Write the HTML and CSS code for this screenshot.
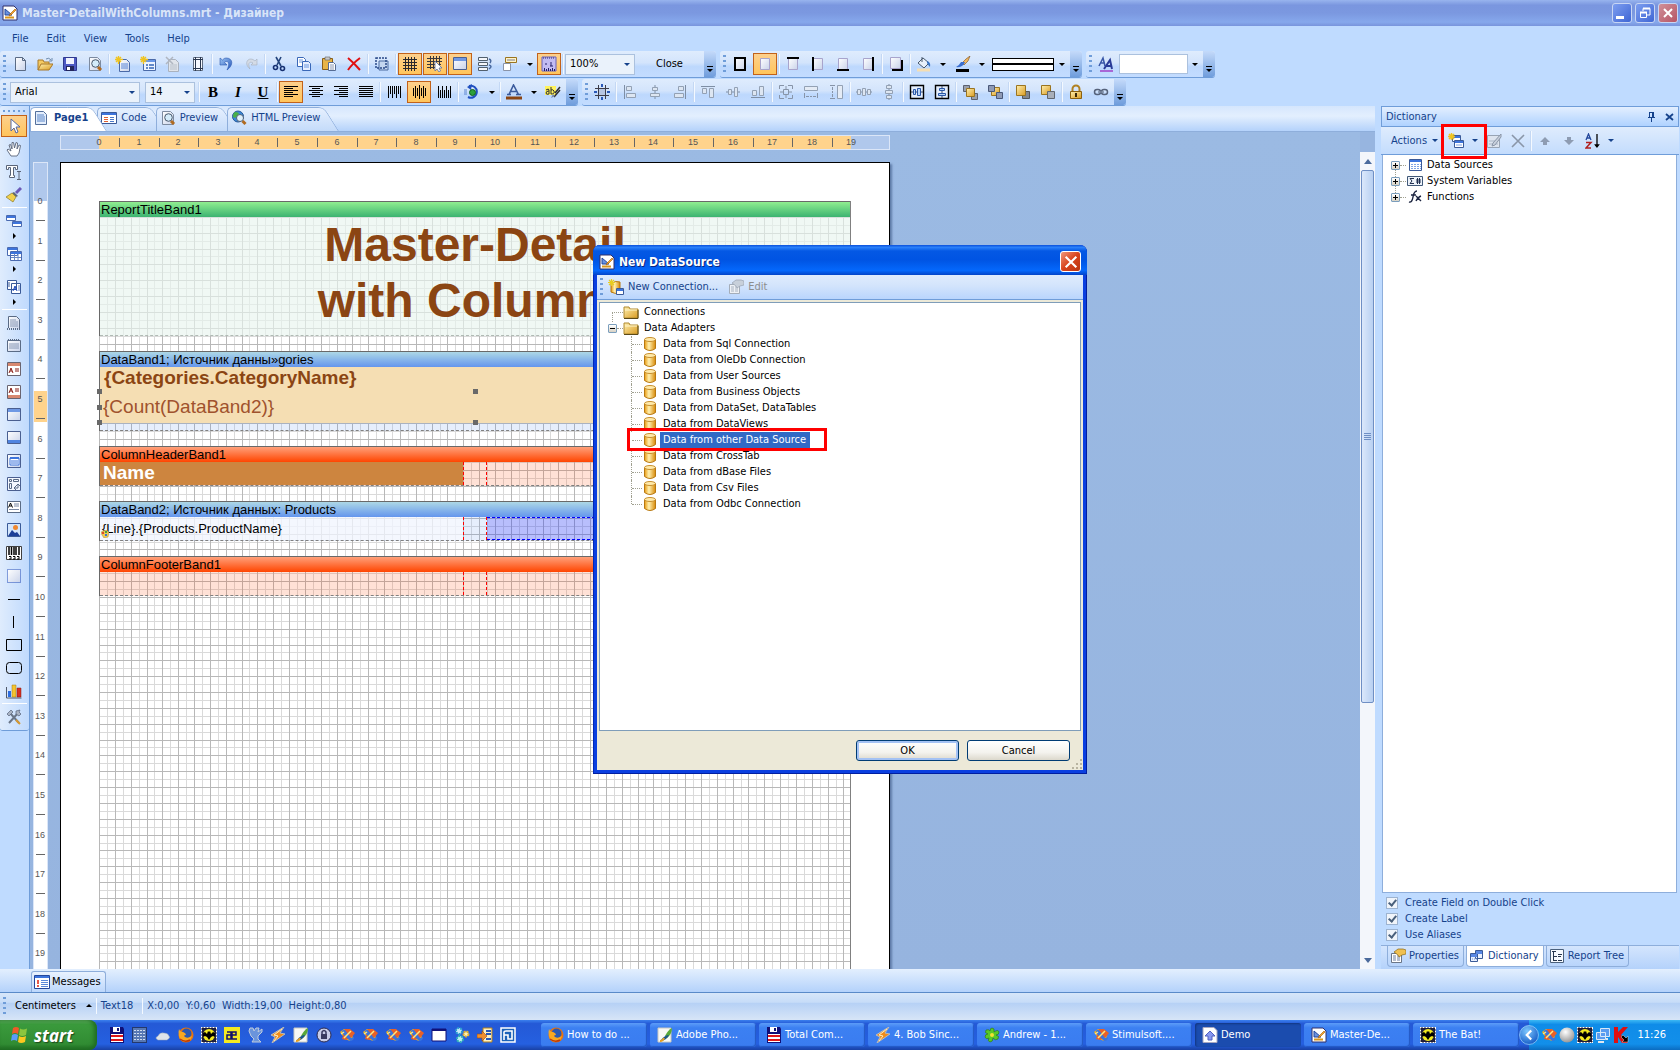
FILE: index.html
```html
<!DOCTYPE html>
<html lang="en">
<head>
    <meta charset="UTF-8">
    <title>Master-DetailWithColumns.mrt - Дизайнер</title>
    <link rel="stylesheet" href="styles.css">
</head>
<body>
<!-- icons -->
<svg class="sprite" aria-hidden="true">
    <defs>
        <linearGradient id="gPaper" x1="0" y1="0" x2="1" y2="1"><stop offset="0" stop-color="#fff"/><stop offset="1" stop-color="#c9d3ea"/></linearGradient>
        <linearGradient id="gGold" x1="0" y1="0" x2="1" y2="1"><stop offset="0" stop-color="#fff0b0"/><stop offset="1" stop-color="#d99a20"/></linearGradient>
        <linearGradient id="gDb" x1="0" y1="0" x2="1" y2="0"><stop offset="0" stop-color="#e89a10"/><stop offset=".4" stop-color="#fff0b0"/><stop offset="1" stop-color="#d88a08"/></linearGradient>
        <linearGradient id="gBlue" x1="0" y1="0" x2="1" y2="1"><stop offset="0" stop-color="#9cc4f4"/><stop offset="1" stop-color="#2455b8"/></linearGradient>
        <radialGradient id="gBall" cx=".4" cy=".3" r=".8"><stop offset="0" stop-color="#fff"/><stop offset="1" stop-color="#8a8a8a"/></radialGradient>
        <radialGradient id="gTray" cx=".4" cy=".3" r=".8"><stop offset="0" stop-color="#7cc8ff"/><stop offset="1" stop-color="#0a50c0"/></radialGradient>
    </defs>
    <symbol id="app" viewBox="0 0 16 16"><path d="M1 1h11l3 3v11H1z" fill="#fff" stroke="#30306a"/><path d="M3 4v6h7z" fill="#6a92e0" stroke="#23479c"/><path d="M13 4L8 9l-1 2 2-1 5-5z" fill="#f6a82c" stroke="#a05808" stroke-width=".6"/><path d="M3 12.500h9" stroke="#d8951c" stroke-width="2"/></symbol>
    <symbol id="new" viewBox="0 0 16 16"><path d="M3.500 1.500h7l3 3v10h-10z" fill="url(#gPaper)" stroke="#5a6b85"/><path d="M10.500 1.500v3h3" fill="none" stroke="#5a6b85"/></symbol>
    <symbol id="open" viewBox="0 0 16 16"><path d="M1 14V4h5l1 2h5v2" fill="#f4ca62" stroke="#a8782a"/><path d="M1 14l3-6h12l-4 6z" fill="url(#gGold)" stroke="#a8782a"/><path d="M9 3q3-2 5 1m1-2v3h-3" fill="none" stroke="#6f8bab"/></symbol>
    <symbol id="save" viewBox="0 0 16 16"><path d="M1.500 1.500h13v13h-12l-1-1z" fill="#4d59c4" stroke="#303a90"/><path d="M4 2h8v6H4z" fill="#f0f2ff"/><path d="M4 10h8v5H4z" fill="#23265c"/><path d="M5 11h3v3H5z" fill="#fff"/></symbol>
    <symbol id="preview" viewBox="0 0 16 16"><path d="M2.500 1.500h8l3 3v10h-11z" fill="url(#gPaper)" stroke="#7d8ba0"/><circle cx="8.500" cy="7.500" r="3.800" fill="#d4ecfa" stroke="#48586c"/><path d="M11 11l3 3" stroke="#b06a20" stroke-width="3"/></symbol>
    <symbol id="newpage" viewBox="0 0 16 16"><path d="M4.500 3.500h7l3 3v9h-10z" fill="url(#gPaper)" stroke="#4a6aa8"/><path d="M6 8h7M6 10h7M6 12h7" stroke="#5a86d8"/><path d="M3.500 0v8M0 3.500h8M1 1l5 5M6 1L1 6" stroke="#f0c420" stroke-width="1.400"/></symbol>
    <symbol id="newform" viewBox="0 0 16 16"><path d="M3.500 3.500h12v11h-12z" fill="#eef4ff" stroke="#4a6aa8"/><path d="M4 4h11v2H4z" fill="#6a98e8"/><path d="M6 9h2M9 9h5M6 12h2M9 12h5" stroke="#3465b8" stroke-width="1.500"/><path d="M3.500 0v8M0 3.500h8M1 1l5 5M6 1L1 6" stroke="#f0c420" stroke-width="1.400"/></symbol>
    <symbol id="delpage" viewBox="0 0 16 16"><path d="M3.500 3.500h7l3 3v9h-10z" fill="#e0e4ea" stroke="#aab2be"/><path d="M5 9h7M5 11h7M5 13h7" stroke="#b8c0ca"/><path d="M1 1l7 7M8 1L1 8" stroke="#b0b6c0" stroke-width="1.500"/></symbol>
    <symbol id="pagesetup" viewBox="0 0 16 16"><path d="M3.500 1.500h9v13h-9z" fill="#f5f8ff" stroke="#5f6c80"/><path d="M5.500 1v14M10.500 1v14M3 3.500h10M3 12.500h10" stroke="#2a3850"/></symbol>
    <symbol id="undo" viewBox="0 0 16 16"><path d="M2 2v7h7L6.500 6.500C9 4 13 6 9 14c7-5 6-12-1-12Q6 2 4.500 4z" fill="url(#gBlue)" stroke="#2a58b0" stroke-width=".6"/></symbol>
    <symbol id="redo" viewBox="0 0 16 16"><path d="M14 3v6H8l2-2C7 5 4 7 7 13 2 9 3 3 8 3q2 0 4 2z" fill="#d4dbe6" stroke="#a4aebc" stroke-width=".6"/></symbol>
    <symbol id="cut" viewBox="0 0 16 16"><path d="M5 1l5 9M10 1L6 9" stroke="#24447c" stroke-width="1.600"/><circle cx="4.500" cy="11.500" r="2" fill="none" stroke="#162f70" stroke-width="1.600"/><circle cx="11.500" cy="12.500" r="2" fill="none" stroke="#162f70" stroke-width="1.600"/></symbol>
    <symbol id="copy" viewBox="0 0 16 16"><path d="M1.500 1.500h6l2 2v7h-8z" fill="#fff" stroke="#3a68b8"/><path d="M6.500 5.500h6l2 2v7h-8z" fill="#e6eeff" stroke="#3a68b8"/><path d="M3 4h4M3 6h3M8 9h5M8 11h5" stroke="#6a98e0"/></symbol>
    <symbol id="paste" viewBox="0 0 16 16"><path d="M1.500 2.500h10v11h-10z" fill="#e8b446" stroke="#8a6018"/><path d="M4 1h5v3H4z" fill="#c9c9c9" stroke="#606060" stroke-width=".6"/><path d="M7.500 6.500h5l2 2v6h-7z" fill="#fff" stroke="#566c94"/><path d="M9 9h4M9 11h4M9 13h4" stroke="#8a98b4"/></symbol>
    <symbol id="delete" viewBox="0 0 16 16"><path d="M2 2q6 5 12 12M14 2Q6 8 2 14" fill="none" stroke="#e01010" stroke-width="2"/></symbol>
    <symbol id="selectall" viewBox="0 0 16 16"><path d="M5 5h9v9H5z" fill="#c4d6f0" stroke="#4a6aa0"/><path d="M2 2h10v10H2z" fill="none" stroke="#2a4a88" stroke-width="1.500" stroke-dasharray="2 1"/></symbol>
    <symbol id="grid" viewBox="0 0 16 16"><path d="M3.500 1v14M6.500 1v14M9.500 1v14M12.500 1v14M1 3.500h14M1 6.500h14M1 9.500h14M1 12.500h14" stroke="#28282c"/></symbol>
    <symbol id="gridsnap" viewBox="0 0 16 16"><path d="M3.500 0v13M6.500 0v13M9.500 0v13M12.500 0v9M0 2.500h15M0 5.500h15M0 8.500h14M0 11.500h8" stroke="#38383c"/><path d="M8 5v10l2-2 2 3 1.500-1-1.500-3h3z" fill="#fff" stroke="#5a6ea0" stroke-width=".8"/></symbol>
    <symbol id="headers" viewBox="0 0 16 16"><path d="M1.500 1.500h13v12h-13z" fill="url(#gPaper)" stroke="#4a5f90"/><path d="M2 2h12v3H2z" fill="#6f98e4"/></symbol>
    <symbol id="order" viewBox="0 0 16 16"><path d="M1.500 1.500h9v3h-9zM1.500 6.500h9v3h-9zM1.500 11.500h9v3h-9z" fill="#f4f6fa" stroke="#52606e"/><path d="M12 3q3 1 1 4m-1 2q4 1 0 4" fill="none" stroke="#4a6aa0" stroke-width="1.500"/></symbol>
    <symbol id="quick" viewBox="0 0 16 16"><path d="M3.500 1.500h11v5h-11z" fill="#fff4c8" stroke="#9a7420"/><path d="M5 4h8" stroke="#7a7a90"/><path d="M1.500 7.500h7v7h-7z" fill="#fff" stroke="#8a94a8"/></symbol>
    <symbol id="rulers" viewBox="0 0 16 16"><path d="M1 1h14v14H1z" fill="#c2bcf2" stroke="#6a62b8"/><path d="M2 2h12" stroke="#2c2870" stroke-dasharray="1 1"/><path d="M3.500 12v3M5.500 13v2M7.500 12v3M9.500 13v2M11.500 12v3M13.500 13v2M4 8h2M10 6v4M9 10h3" stroke="#24206a"/></symbol>
    <symbol id="ball" viewBox="0 0 16 16"><path d="M3 2h10v12H3z" fill="url(#gPaper)" stroke="#000" stroke-width="2"/></symbol>
    <symbol id="bnone" viewBox="0 0 16 16"><path d="M3.500 2.500h9v11h-9z" fill="url(#gPaper)" stroke="#a8a4cc"/></symbol>
    <symbol id="btop" viewBox="0 0 16 16"><path d="M3.500 2.500h9v11h-9z" fill="url(#gPaper)" stroke="#a8a4cc"/><path d="M2 2h12" stroke="#000" stroke-width="2"/></symbol>
    <symbol id="bleft" viewBox="0 0 16 16"><path d="M3.500 2.500h9v11h-9z" fill="url(#gPaper)" stroke="#a8a4cc"/><path d="M3 1v14" stroke="#000" stroke-width="2"/></symbol>
    <symbol id="bbottom" viewBox="0 0 16 16"><path d="M3.500 2.500h9v11h-9z" fill="url(#gPaper)" stroke="#a8a4cc"/><path d="M2 14h12" stroke="#000" stroke-width="2"/></symbol>
    <symbol id="bright" viewBox="0 0 16 16"><path d="M3.500 2.500h9v11h-9z" fill="url(#gPaper)" stroke="#a8a4cc"/><path d="M13 1v14" stroke="#000" stroke-width="2"/></symbol>
    <symbol id="shadow" viewBox="0 0 16 16"><path d="M4 4h11v11H4z" fill="#000"/><path d="M2.500 1.500h10v11h-10z" fill="url(#gPaper)" stroke="#a8a4cc"/></symbol>
    <symbol id="bucket" viewBox="0 0 16 16"><path d="M2 7l5-5 6 5-5 5z" fill="#e8f0fa" stroke="#48586c"/><path d="M6 6V1" stroke="#48586c"/><path d="M11 5q4 1 3 6-2-2-3-4" fill="#3a74c4"/><path d="M1 14h13" stroke="#f5deb3" stroke-width="3"/></symbol>
    <symbol id="pen" viewBox="0 0 16 16"><path d="M15 0l-2 5-4 4-2-2 4-4z" fill="#f0b860" stroke="#7a4a18" stroke-width=".6"/><path d="M10 6q-2 6-9 5 3-1 5-5z" fill="#3a6ed0"/><path d="M1 14.500h13" stroke="#000" stroke-width="3"/></symbol>
    <symbol id="style" viewBox="0 0 16 16"><path d="M1 10L5 2l2 8M2 7h5" fill="none" stroke="#3a58a8" stroke-width="1.500"/><path d="M6 13l6-9 2 9M8 10h5" fill="none" stroke="#2a3c98" stroke-width="2"/><path d="M2 15h13" stroke="#a040c8" stroke-width="1.500"/></symbol>
    <symbol id="aleft" viewBox="0 0 16 16"><path d="M1 2.500h14M1 4.500h9M1 6.500h14M1 8.500h9M1 10.500h14M1 12.500h9" stroke="#000"/></symbol>
    <symbol id="acenter" viewBox="0 0 16 16"><path d="M1 2.500h14M4 4.500h8M1 6.500h14M4 8.500h8M1 10.500h14M4 12.500h8" stroke="#000"/></symbol>
    <symbol id="aright" viewBox="0 0 16 16"><path d="M1 2.500h14M6 4.500h9M1 6.500h14M6 8.500h9M1 10.500h14M6 12.500h9" stroke="#000"/></symbol>
    <symbol id="ajust" viewBox="0 0 16 16"><path d="M1 2.500h14M1 4.500h14M1 6.500h14M1 8.500h14M1 10.500h14M1 12.500h14" stroke="#000"/></symbol>
    <symbol id="vtop" viewBox="0 0 16 16"><path d="M2.500 2v12M4.500 2v8M6.500 2v12M8.500 2v8M10.500 2v12M12.500 2v8M14.500 2v12" stroke="#000"/></symbol>
    <symbol id="vmid" viewBox="0 0 16 16"><path d="M2.500 4v8M4.500 2v12M6.500 4v8M8.500 1v14M10.500 4v8M12.500 2v12M14.500 4v8" stroke="#000"/></symbol>
    <symbol id="vbot" viewBox="0 0 16 16"><path d="M2.500 2v12M4.500 6v8M6.500 2v12M8.500 6v8M10.500 2v12M12.500 6v8M14.500 2v12" stroke="#000"/></symbol>
    <symbol id="rotate" viewBox="0 0 16 16"><path d="M5 2a6 6 0 1 1-1 11" fill="none" stroke="#2050c0" stroke-width="2"/><path d="M8 0L3 3l4 3z" fill="#2050c0"/><circle cx="8.500" cy="8.500" r="3" fill="#2da03a" stroke="#11601c"/><path d="M0 6h3M0 8h3M0 10h3" stroke="#5a84d0"/></symbol>
    <symbol id="fontcolor" viewBox="0 0 16 16"><path d="M3 10.500L7.500 1l5 9.500M5 7.500h6M1 10.500h4M10 10.500h5" fill="none" stroke="#3a5a9c" stroke-width="1.600"/><path d="M0 14h16" stroke="#8b4513" stroke-width="3"/></symbol>
    <symbol id="cond" viewBox="0 0 16 16"><path d="M0 2h11v9H0z" fill="#fff35c"/><path d="M10 9l5-6M9 13l6-7" stroke="#303030" stroke-width="1.500"/><path d="M1 6q3-2 3 0v4q-3 1-3-1 0-2 3-2M6 3v7q4 0 3-3-1-2-3-1" fill="none" stroke="#303030"/><path d="M6 14l4-2-2-2z" fill="#7888a8"/></symbol>
    <symbol id="togrid" viewBox="0 0 16 16"><path d="M5 5h6v6H5z" fill="#b6c6e4"/><path d="M4.500 1v14M11.500 1v14M1 4.500h14M1 11.500h14" stroke="#3c3c48"/><path d="M8 0v3M8 13v3M0 8h3M13 8h3" stroke="#2a58b8" stroke-width="2"/></symbol>
    <symbol id="gleft" viewBox="0 0 16 16"><path d="M2.500 1v14" stroke="#7e8ea4"/><path d="M4.500 2.500h5v4h-5zM4.500 9.500h9v4h-9z" fill="#dde6f2" stroke="#93a1b4"/></symbol>
    <symbol id="gcenter" viewBox="0 0 16 16"><path d="M8 1v14" stroke="#7e8ea4"/><path d="M5.500 3.500h5v3h-5zM3.500 9.500h9v3h-9z" fill="#dde6f2" stroke="#93a1b4"/></symbol>
    <symbol id="gright" viewBox="0 0 16 16"><path d="M13.500 1v14" stroke="#7e8ea4"/><path d="M6.500 2.500h5v4h-5zM2.500 9.500h9v4h-9z" fill="#dde6f2" stroke="#93a1b4"/></symbol>
    <symbol id="gtop" viewBox="0 0 16 16"><path d="M1 2.500h14" stroke="#7e8ea4"/><path d="M2.500 4.500h4v5h-4zM9.500 4.500h4v9h-4z" fill="#dde6f2" stroke="#93a1b4"/></symbol>
    <symbol id="gmid" viewBox="0 0 16 16"><path d="M1 8h14" stroke="#7e8ea4"/><path d="M3.500 5.500h3v5h-3zM9.500 3.500h3v9h-3z" fill="#dde6f2" stroke="#93a1b4"/></symbol>
    <symbol id="gbot" viewBox="0 0 16 16"><path d="M1 13.500h14" stroke="#7e8ea4"/><path d="M2.500 6.500h4v5h-4zM9.500 2.500h4v9h-4z" fill="#dde6f2" stroke="#93a1b4"/></symbol>
    <symbol id="gsize" viewBox="0 0 16 16"><path d="M1.500 5V1.500H6M10 1.500h4.500V5M1.500 11v3.500H6M10 14.500h4.500V11M8 2v3M8 11v3M2 8h3M11 8h3M5.500 5.500h5v5h-5z" fill="none" stroke="#8794a8"/></symbol>
    <symbol id="gwidth" viewBox="0 0 16 16"><path d="M1.500 2.500h13v4h-13z" fill="#e4ebf5" stroke="#93a1b4"/><path d="M1.500 9v5M14.500 9v5M3 12.500h3M10 12.500h3M7 12.500h2" stroke="#8794a8"/></symbol>
    <symbol id="gheight" viewBox="0 0 16 16"><path d="M9.500 1.500h5v13h-5z" fill="#e4ebf5" stroke="#93a1b4"/><path d="M2 1.500h5M2 14.500h5M4.500 3v3M4.500 10v3M4.500 7v2" stroke="#8794a8"/></symbol>
    <symbol id="ghor" viewBox="0 0 16 16"><path d="M0 8h16" stroke="#7e8ea4"/><path d="M1.500 5.500h3v5h-3zM6.500 4.500h3v7h-3zM11.500 5.500h3v5h-3z" fill="#dde6f2" stroke="#93a1b4"/></symbol>
    <symbol id="gver" viewBox="0 0 16 16"><path d="M8 0v16" stroke="#7e8ea4"/><path d="M5.500 1.500h5v3h-5zM4.500 6.500h7v3h-7zM5.500 11.500h5v3h-5z" fill="#dde6f2" stroke="#93a1b4"/></symbol>
    <symbol id="chor" viewBox="0 0 16 16"><path d="M1.500 1.500h13v13h-13z" fill="#e4eefc" stroke="#000" stroke-width="1.400"/><path d="M2 8h12" stroke="#3a4a66"/><path d="M4.500 5.500h2v5h-2zM8.500 4.500h3v7h-3z" fill="#b8d4f8" stroke="#2a57a8"/></symbol>
    <symbol id="cver" viewBox="0 0 16 16"><path d="M1.500 1.500h13v13h-13z" fill="#e4eefc" stroke="#000" stroke-width="1.400"/><path d="M8 2v12" stroke="#3a4a66"/><path d="M5.500 4.500h5v2h-5zM4.500 9.500h7v2h-7z" fill="#b8d4f8" stroke="#2a57a8"/></symbol>
    <symbol id="front" viewBox="0 0 16 16"><path d="M1.500 1.500h6v6h-6zM9.500 9.500h6v6h-6z" fill="#9aa0ac" stroke="#5a6070"/><path d="M4.500 4.500h8v8h-8z" fill="url(#gGold)" stroke="#9a7420"/></symbol>
    <symbol id="back" viewBox="0 0 16 16"><path d="M4.500 3.500h8v8h-8z" fill="url(#gGold)" stroke="#9a7420"/><path d="M1.500 1.500h6v6h-6zM9.500 8.500h6v6h-6z" fill="#8f9ab4" stroke="#4a5878"/></symbol>
    <symbol id="fwd" viewBox="0 0 16 16"><path d="M7.500 7.500h7v7h-7z" fill="#808690" stroke="#505660"/><path d="M1.500 1.500h9v10h-9z" fill="url(#gGold)" stroke="#9a7420"/></symbol>
    <symbol id="bwd" viewBox="0 0 16 16"><path d="M1.500 1.500h9v9h-9z" fill="url(#gGold)" stroke="#9a7420"/><path d="M7.500 7.500h7v7h-7z" fill="#a8aeb8" stroke="#606670"/></symbol>
    <symbol id="lock" viewBox="0 0 16 16"><path d="M4.500 8V5a3.500 3.500 0 0 1 7 0v3" fill="none" stroke="#b08020" stroke-width="2"/><path d="M2.500 7.500h11v7h-11z" fill="url(#gGold)" stroke="#8a6010"/><path d="M8 9v4" stroke="#3a2808" stroke-width="2"/></symbol>
    <symbol id="link" viewBox="0 0 16 16"><rect x="1.500" y="5.500" width="6" height="5" rx="2.500" fill="none" stroke="#56627a" stroke-width="1.500"/><rect x="8.500" y="5.500" width="6" height="5" rx="2.500" fill="none" stroke="#56627a" stroke-width="1.500"/><path d="M5 8h6" stroke="#7a88a0" stroke-width="1.500"/></symbol>
    <symbol id="arrow" viewBox="0 0 16 16"><path d="M5 1v12l3-3 2 5 2-1-2-5h4z" fill="#fff" stroke="#5566a0"/></symbol>
    <symbol id="hand" viewBox="0 0 16 16"><path d="M5 15L1 9l1-1 3 2-2-6 1.500-.5L6 8 6 1.500h1.500L8.500 7 10 1.500l1.500.5L11 8l2-4 1.500.5L13 12l-2 3z" fill="#fff" stroke="#5a6478" stroke-width=".9"/></symbol>
    <symbol id="text" viewBox="0 0 16 16"><path d="M.5 1.500h11v4h-2v-2h-2v8h1v2h-5v-2h1v-8h-2v2h-2z" fill="#fff" stroke="#5a6478"/><path d="M11 7.500h4M13 8v7M11 15.500h4" stroke="#5a6478"/></symbol>
    <symbol id="brush" viewBox="0 0 16 16"><path d="M15 1l-5 5" stroke="#6a5ab8" stroke-width="3"/><path d="M8 5l4 4-2 1-4-4z" fill="#606878"/><path d="M6 6l4 4-3 5-7-5z" fill="#f2d04c" stroke="#8a7a28" stroke-width=".7"/></symbol>
    <symbol id="bands" viewBox="0 0 16 16"><path d="M.5 2.500h9v5h-9zM6.500 8.500h9v5h-9z" fill="#fff" stroke="#4a6ab0"/><path d="M1 3h8v2H1zM7 9h8v2H7z" fill="#3d74dc"/></symbol>
    <symbol id="cross" viewBox="0 0 16 16"><path d="M1.500 1.500h10v8h-10zM4.500 5.500h11v9h-11z" fill="#fff" stroke="#4a6ab0"/><path d="M2 2h9v2H2zM5 6h10v2H5z" fill="#3d74dc"/><path d="M5 11.500h10M8.500 8v6M12 8v6" stroke="#6a88c4"/></symbol>
    <symbol id="comps" viewBox="0 0 16 16"><path d="M1.500 1.500h9v9h-9zM5.500 4.500h9v10h-9z" fill="#fff" stroke="#3a5a98"/><path d="M3 3v5" stroke="#3a5a98"/><path d="M7 12l2-5 2 5M8 10h2" fill="none" stroke="#1c48b8"/><path d="M12 7h2M12 9h2M12 11h2" stroke="#6a88c4"/></symbol>
    <symbol id="ptop" viewBox="0 0 16 16"><path d="M2.500 13V1.500h8l3 3V14" fill="url(#gPaper)" stroke="#5a6b85"/><path d="M4 5h6M4 7h8M4 9h8M4 11h8" stroke="#8898b4"/><path d="M1 14h14" stroke="#5a6b85" stroke-width="2" stroke-dasharray="1 1"/></symbol>
    <symbol id="pband" viewBox="0 0 16 16"><path d="M1.500 2.500h13v11h-13z" fill="url(#gPaper)" stroke="#5a6b85"/><path d="M2 2h12" stroke="#5a6b85" stroke-width="2" stroke-dasharray="1 1"/><path d="M3 6h10M3 8h10M3 10h10" stroke="#8898b4"/></symbol>
    <symbol id="hdr" viewBox="0 0 16 16"><path d="M1.500 1.500h13v13h-13z" fill="#fff" stroke="#6a6470"/><path d="M2 2h12v3H2z" fill="#d88870"/><path d="M3 12l2-5 2 5M4 10h2M9 8h4M9 10h4" fill="none" stroke="#8a1c14"/></symbol>
    <symbol id="ftr" viewBox="0 0 16 16"><path d="M1.500 1.500h13v13h-13z" fill="#fff" stroke="#6a6470"/><path d="M2 11h12v3H2z" fill="#d88870"/><path d="M3 9l2-5 2 5M4 7h2M9 5h4M9 7h4" fill="none" stroke="#8a1c14"/></symbol>
    <symbol id="ftrblue" viewBox="0 0 16 16"><path d="M1.500 1.500h13v12h-13z" fill="url(#gPaper)" stroke="#4a5f90"/><path d="M2 10h12v3H2z" fill="#4f84e0"/></symbol>
    <symbol id="dataBand" viewBox="0 0 16 16"><path d="M1.500 1.500h13v13h-13z" fill="url(#gPaper)" stroke="#4a5f90"/><path d="M4 5h9v7H4z" fill="#fff" stroke="#3d74dc"/><path d="M5 8h7M5 10h7" stroke="#3d74dc"/><path d="M4 5h9" stroke="#3d74dc" stroke-width="2"/></symbol>
    <symbol id="crosstab" viewBox="0 0 16 16"><path d="M1.500 1.500h13v13h-13z" fill="#f4f8ff" stroke="#4a5f90"/><path d="M3.500 3.500h2v2h-2zM3.500 7.500h2v5h-2zM7.500 3.500h5v2h-5zM8 12h4V8M10 10l2-2 2 2M10 10l-2 2 2 2" fill="none" stroke="#5a6b85"/></symbol>
    <symbol id="textbox" viewBox="0 0 16 16"><path d="M1.500 2.500h13v11h-13z" fill="#fff" stroke="#5a6b85"/><path d="M2.500 8.500l2-4.500 2 4.500M3.500 7h2" fill="none" stroke="#000"/><path d="M8 5h5M8 7h5M3 10.500h10" stroke="#7888a4"/></symbol>
    <symbol id="image" viewBox="0 0 16 16"><path d="M1.500 1.500h13v13h-13z" fill="#d4e6fc" stroke="#3a5a98"/><path d="M2 14l4-6 3 3 2-1 3 4z" fill="#1c3f98"/><circle cx="9.500" cy="5.500" r="2.500" fill="#f08830"/></symbol>
    <symbol id="barcode" viewBox="0 0 16 16"><path d="M.5 1.500h15v13H.5z" fill="#fff" stroke="#404040"/><path d="M3 2v8M5.500 2v8M8 2v8M10 2v8M13 2v8" stroke="#000" stroke-width="1.500"/><path d="M3 11.500h2v2.500H3M7 11.500h2v2.500H7M11 11.500h2v2.500h-2" fill="none" stroke="#000"/></symbol>
    <symbol id="panel" viewBox="0 0 16 16"><path d="M1.500 1.500h13v13h-13z" fill="url(#gPaper)" stroke="#1c48b8" stroke-dasharray="1 1"/></symbol>
    <symbol id="hline" viewBox="0 0 16 16"><path d="M2 8.500h12" stroke="#000"/></symbol>
    <symbol id="vline" viewBox="0 0 16 16"><path d="M7.500 2v12" stroke="#000"/></symbol>
    <symbol id="rect" viewBox="0 0 16 16"><path d="M.5 2.500h15v11H.5z" fill="none" stroke="#000"/></symbol>
    <symbol id="rrect" viewBox="0 0 16 16"><rect x=".5" y="2.500" width="15" height="11" rx="3" fill="none" stroke="#000"/></symbol>
    <symbol id="chart" viewBox="0 0 16 16"><path d="M.5 4v11h15" fill="none" stroke="#505868"/><path d="M2 8h3v6H2z" fill="#2c6ce0"/><path d="M6 2h4v12H6z" fill="#f4c430" stroke="#a07a10" stroke-width=".5"/><path d="M11 5h4v9h-4z" fill="#d83020" stroke="#801810" stroke-width=".5"/></symbol>
    <symbol id="tools" viewBox="0 0 16 16"><path d="M3 14L12 4M4 4l9 10" stroke="#6a7688" stroke-width="2"/><path d="M1 5l4-4 2 2-4 4zM10 2l4-1-1 2 2 2-2 2-3-2z" fill="#aab4c4" stroke="#56627a" stroke-width=".7"/><path d="M10 11l4 4" stroke="#d89a30" stroke-width="2"/></symbol>
    <symbol id="page" viewBox="0 0 16 16"><path d="M2.500 1.500h8l3 3v10h-11z" fill="#e4eefc" stroke="#54709c"/><path d="M4 5h7M4 7h8M4 9h8M4 11h8" stroke="#5a86c8"/></symbol>
    <symbol id="code" viewBox="0 0 16 16"><path d="M.5 2.500h15v11H.5z" fill="#fff" stroke="#3a5a98"/><path d="M1 3h14v2H1z" fill="#3d74dc"/><path d="M3 7.500h4M3 9.500h4M3 11.500h4" stroke="#e06030"/><path d="M9 7.500h4M9 9.500h4M9 11.500h4" stroke="#4a78c8"/></symbol>
    <symbol id="globe" viewBox="0 0 16 16"><circle cx="7" cy="6.500" r="5.500" fill="#3a88d8" stroke="#2a5a98"/><path d="M4 2q5 0 4 4-4 3-6 1 0-4 2-5" fill="#48b048"/><circle cx="9" cy="8" r="3.500" fill="#e0f0fa" stroke="#506078"/><path d="M11.500 11l3 3" stroke="#b06a20" stroke-width="3"/></symbol>
    <symbol id="table" viewBox="0 0 16 16"><path d="M2.500 2.500h12v11h-12z" fill="#fff" stroke="#3a5a98"/><path d="M3 3h11v2H3z" fill="#3d74dc"/><path d="M4 7.500h10M4 9.500h10M4 11.500h10" stroke="#80a4e4" stroke-dasharray="2 1"/></symbol>
    <symbol id="sigma" viewBox="0 0 16 16"><path d="M.5 3.500h15v9H.5z" fill="#eef3fa" stroke="#405878"/><path d="M7 5.500H3l2 2.500-2 2.500h4M10.500 5v6M12.500 5v6M9 7h5M9 9h5" fill="none" stroke="#203050"/></symbol>
    <symbol id="fx" viewBox="0 0 16 16"><path d="M2 13q3 1 4-5t4-6M4 6h5M9 7l5 5M14 7q-3 1-5 5" fill="none" stroke="#1c2440" stroke-width="1.400"/></symbol>
    <symbol id="newds" viewBox="0 0 16 16"><path d="M4.500 2.500h8v6h-8zM6.500 7.500h9v7h-9z" fill="#fff" stroke="#3a5a98"/><path d="M5 3h7v2H5zM7 8h8v2H7z" fill="#3d74dc"/><path d="M8 12h6" stroke="#80a4e4"/><path d="M3.500 0v7M0 3.500h7M1 1l5 5M6 1L1 6" stroke="#f0c420" stroke-width="1.500"/></symbol>
    <symbol id="editds" viewBox="0 0 16 16"><path d="M1.500 2.500h12v12h-12z" fill="#dde4ee" stroke="#98a4b4"/><path d="M3 8h9M3 11h9" stroke="#a8b4c4"/><path d="M15 1L7 10l-1 3 3-1 6-8z" fill="#c8d0dc" stroke="#8a96a8"/></symbol>
    <symbol id="delds" viewBox="0 0 16 16"><path d="M2 2l12 12M14 2L2 14" stroke="#8a96a8" stroke-width="1.600"/></symbol>
    <symbol id="up" viewBox="0 0 16 16"><path d="M8 4l5 5h-3v3H6V9H3z" fill="#8e9cb2"/></symbol>
    <symbol id="down" viewBox="0 0 16 16"><path d="M8 12l5-5h-3V4H6v3H3z" fill="#8e9cb2"/></symbol>
    <symbol id="sort" viewBox="0 0 16 16"><path d="M1 7l2.500-6L6 7M2 5h3" fill="none" stroke="#23479c" stroke-width="1.300"/><path d="M1 9.500h5L1 15h5" fill="none" stroke="#b02020" stroke-width="1.500"/><path d="M12 1v12M10.500 12l1.500 2 1.500-2z" fill="#000" stroke="#000" stroke-width="1.300"/></symbol>
    <symbol id="pin" viewBox="0 0 16 16"><path d="M5 3.500h5M5.500 3v5M8.500 3v5M9.500 3v5M4 8.500h7M7.500 9v4" stroke="#15428b"/></symbol>
    <symbol id="x" viewBox="0 0 16 16"><path d="M4 5l7 6M11 5l-7 6" stroke="#15428b" stroke-width="1.800"/></symbol>
    <symbol id="folder" viewBox="0 0 16 16"><path d="M1 3h5l1 2h8v9H1z" fill="url(#gGold)" stroke="#b08a30"/><path d="M2 6h12" stroke="#fff6cc"/><path d="M1 14.500h14V6" fill="none" stroke="#5c4a18"/></symbol>
    <symbol id="db" viewBox="0 0 16 16"><path d="M2.500 3.500v9q5.500 4 11 0v-9" fill="url(#gDb)" stroke="#b87810"/><ellipse cx="8" cy="3.500" rx="5.500" ry="2" fill="#ffe9a8" stroke="#c89030"/></symbol>
    <symbol id="newdb" viewBox="0 0 16 16"><path d="M3 5v8q5 3 9 0V3q-5-2-9 2" fill="url(#gDb)" stroke="#b87810"/><path d="M8.500 9.500h7v6h-7z" fill="#fff" stroke="#3a5a98"/><path d="M9 11h6" stroke="#3d74dc" stroke-width="2"/><path d="M3.500 0v7M0 3.500h7M1 1l5 5M6 1L1 6" stroke="#e8cc20" stroke-width="1.200"/></symbol>
    <symbol id="props" viewBox="0 0 16 16"><path d="M1.500 5.500h10v9h-10z" fill="#fff" stroke="#6a7688"/><path d="M3 8h3M3 10h3M3 12h3M7 8h3M7 10h3M7 12h3" stroke="#6a7ca0"/><path d="M4 4l4-3h5l3 1v4l-4 1-3 2-1-2z" fill="#f0c050" stroke="#8a6818" stroke-width=".7"/></symbol>
    <symbol id="propsoff" viewBox="0 0 16 16"><path d="M1.500 5.500h10v9h-10z" fill="#eef1f5" stroke="#a4adb9"/><path d="M3 8h3M3 10h3M3 12h3M7 8h3M7 10h3M7 12h3" stroke="#a8b2c0"/><path d="M4 4l4-3h5l3 1v4l-4 1-3 2-1-2z" fill="#c8d0da" stroke="#98a2b0" stroke-width=".7"/></symbol>
    <symbol id="dict" viewBox="0 0 16 16"><path d="M6.500 2.500h7v8h-7zM1.500 5.500h7v8h-7z" fill="#e8f0ff" stroke="#3a5a98"/><path d="M7 3h6v3H7zM2 6h6v3H2z" fill="#5a88e4"/><path d="M3 11h5" stroke="#7a96d0" stroke-dasharray="1 1"/></symbol>
    <symbol id="tree" viewBox="0 0 16 16"><path d="M1.500 1.500h13v13h-13z" fill="#f6faff" stroke="#4a607c"/><path d="M3 3.500h4M4.500 4v9M5 8.500h3M5 12.500h3M9 6.500h4M9 8.500h3M9 12.500h4" stroke="#26364e"/></symbol>
    <symbol id="msg" viewBox="0 0 16 16"><path d="M.5 1.500h15v13H.5z" fill="#fff" stroke="#23479c"/><path d="M1 2h14v2H1z" fill="#3d74dc"/><path d="M4 6v4M4 11v2" stroke="#e03020" stroke-width="1.600"/><path d="M7 6.500h7M7 8.500h7M7 10.500h7M7 12.500h7" stroke="#5a88d8"/></symbol>
    <symbol id="palette" viewBox="0 0 8 8"><path d="M0 2l5-2 3 2-1 5-4 1-2-3z" fill="#f0cc50" stroke="#b08830" stroke-width=".5"/><path d="M1 2h2v2H1z" fill="#e04828"/><path d="M4 1h2v2H4z" fill="#48a040"/><path d="M4 4h2v2H4z" fill="#3a70d0"/></symbol>
    <symbol id="floppy" viewBox="0 0 16 16"><path d="M1 0h13l1 2v14H1z" fill="#101078"/><path d="M4 0h7v5H4z" fill="#fff"/><path d="M8 1h2v3H8z" fill="#101078"/><path d="M2 7h12v8H2z" fill="#fff"/><path d="M2 8h12v2H2zM2 12h12v2H2z" fill="#e01818"/></symbol>
    <symbol id="calc" viewBox="0 0 16 16"><path d="M0 0h15v16H0z" fill="#24386c"/><path d="M1 1h13v14H1z" fill="#5878b4"/><path d="M2 3.500h11M2 6.500h11M2 9.500h11M2 12.500h11" stroke="#d0dcf0" stroke-dasharray="2 1"/></symbol>
    <symbol id="cloud" viewBox="0 0 16 16"><path d="M3 13q-4-2 0-4 2-4 6-3 4 0 5 3 2 2-2 4z" fill="#dfe4ea" stroke="#9aa6b4" stroke-width=".5"/></symbol>
    <symbol id="firefox" viewBox="0 0 16 16"><circle cx="8" cy="8" r="7.500" fill="#e87410"/><circle cx="8.500" cy="6.500" r="5" fill="#2a58b0"/><path d="M1 2q1 3 4 3 3 1 3 3-3 0-1 2 3 2 7-1-1 5-6 6-6 0-7-6-1-4 0-7" fill="#f8a820"/><path d="M2 12q5 4 10 1" fill="none" stroke="#c03c08" stroke-width="1.500"/></symbol>
    <symbol id="bat" viewBox="0 0 16 16"><path d="M0 0h16v16H0z" fill="#fff"/><path d="M1 1h14v14H1z" fill="#202040" stroke="#181830" stroke-dasharray="2 1"/><circle cx="8" cy="8" r="6" fill="#f4ea20"/><path d="M2 6l2-1 2 2 1-3 1 1 1-1 1 3 2-2 2 1v4l-2-1-2 1-2 3-2-3-2-1-2 1z" fill="#000"/></symbol>
    <symbol id="ae" viewBox="0 0 16 16"><path d="M0 0h16v16H0z" fill="#f4ea20"/><path d="M3 5h4v7H3V8h9V5H8v7h5" fill="none" stroke="#10106a" stroke-width="1.500"/></symbol>
    <symbol id="claw" viewBox="0 0 16 16"><path d="M3 1h3l1 3 2-3h3l-1 4 4-3v3l-4 4v3l3 3h-9l2-3-3-3-2-5z" fill="#6a94dc" stroke="#c0ccdc"/></symbol>
    <symbol id="winamp" viewBox="0 0 16 16"><path d="M14 0L1 8l4 2-3 6 13-9-5-1z" fill="#f08c1c" stroke="#b8bcc0"/><path d="M12 2L4 8l4 1-4 5" fill="none" stroke="#fff0c0"/></symbol>
    <symbol id="psd" viewBox="0 0 16 16"><path d="M1 1h13v14H1z" fill="#f8f8f4" stroke="#c8c8c0"/><path d="M15 1q-4 2-7 8l2 2q5-4 5-10" fill="#58a838"/><path d="M4 13q4-5 8-5-2 5-8 6z" fill="#1c5888"/><path d="M3 14q3 0 4-3" stroke="#e8a020" stroke-width="2" fill="none"/></symbol>
    <symbol id="keep" viewBox="0 0 16 16"><circle cx="8" cy="8" r="7" fill="#c8cce8" stroke="#2a2a50"/><path d="M5 7h6v5H5z" fill="#3a3a60"/><path d="M6 7V5q2-3 4 0v2" fill="none" stroke="#3a3a60" stroke-width="1.500"/></symbol>
    <symbol id="stim" viewBox="0 0 16 16"><path d="M1 5l4-3 4 2 5 6-3 4-5-2z" fill="#f0b020"/><path d="M6 2h5l5 4-3 4-6 3-4-1z" fill="#e86028"/><path d="M3 6q0-4 3-3l6 8 3-1q0 4-4 4z" fill="#3a74dc"/><path d="M2 7l3-2M5 11l7-7" stroke="#ffe880" stroke-width="1.500"/></symbol>
    <symbol id="win" viewBox="0 0 16 16"><path d="M1 2h14v12H1z" fill="#fff" stroke="#101078"/><path d="M1 2h14v2H1z" fill="#101078"/></symbol>
    <symbol id="gears" viewBox="0 0 16 16"><circle cx="5" cy="4" r="3" fill="#c8ecf8" stroke="#2a9cd0" stroke-width="2" stroke-dasharray="2 1"/><circle cx="12" cy="7" r="2.500" fill="#fff0b0" stroke="#e0b030" stroke-width="2" stroke-dasharray="2 1"/><circle cx="6" cy="12" r="3" fill="#c0f0f0" stroke="#30b0b8" stroke-width="2" stroke-dasharray="2 1"/></symbol>
    <symbol id="import" viewBox="0 0 16 16"><path d="M6 1h9v14H6z" fill="#fff0c0" stroke="#b08020"/><path d="M9 4h5M9 7h5M9 12h5" stroke="#2858b8" stroke-width="2"/><path d="M0 7h5V4l5 5-5 5v-3H0z" fill="#f09030" stroke="#a04808" stroke-width=".6"/></symbol>
    <symbol id="fb" viewBox="0 0 16 16"><path d="M1 1h14v14H1z" fill="#1c62b8" stroke="#fff" stroke-width="1.500"/><path d="M4 13V5q0-1 2-1h6v8H8V8H4" fill="none" stroke="#fff" stroke-width="1.600"/></symbol>
    <symbol id="flower" viewBox="0 0 16 16"><path d="M8 1q3 0 2 4 4-3 5 0 0 3-3 3 4 1 2 4-3 2-5-1 0 4-3 4-3-1-1-4-3 2-4-1 0-3 3-3Q0 6 2 3q3-1 4 1 0-3 2-3" fill="#58c828" stroke="#287010" stroke-width=".6"/><circle cx="8" cy="8" r="2" fill="#f4e030"/></symbol>
    <symbol id="demo" viewBox="0 0 16 16"><path d="M1 .5h11l3 3v12H1z" fill="#fff" stroke="#a8a8c0"/><path d="M8 4l5 5h-3v4H6V9H3z" fill="#8898f0" stroke="#5060c0"/></symbol>
    <symbol id="gray" viewBox="0 0 16 16"><circle cx="8" cy="8" r="7.500" fill="url(#gBall)"/></symbol>
    <symbol id="net" viewBox="0 0 16 16"><path d="M5.500 1.500h9v8h-9zM1.500 5.500h9v7h-9z" fill="#5a9cf0" stroke="#d8e8f8"/><path d="M3 15h6M12 11v2" stroke="#e0e8f0" stroke-width="2"/></symbol>
    <symbol id="kav" viewBox="0 0 16 16"><path d="M1 0h4v5l5-5h5L8 8l7 8H9L5 10v6H1z" fill="#e01010"/><path d="M15 15H9l2-2-3-3 2-2 3 3 2-2z" fill="#000" stroke="#fff" stroke-width=".4"/></symbol>
    <symbol id="flag" viewBox="0 0 20 18"><path d="M3 2q3-2 6 0L8 8q-3-2-6 0z" fill="#f05a28"/><path d="M10 2.500q3 2 7 0L16 9q-4 2-7 0z" fill="#8cc63e"/><path d="M2 9q3-2 6 0l-1 6q-3-2-6 0z" fill="#5a9cf8"/><path d="M9 10q3 2 7 0l-1 6q-4 2-7 0z" fill="#fcc820"/></symbol>
</svg>

<header class="titlebar">
    <svg class="ic"><use href="#app"/></svg>
    <h1>Master-DetailWithColumns.mrt - Дизайнер</h1>
    <div class="winbtns">
        <button aria-label="Minimize"><i class="min"></i></button>
        <button aria-label="Restore"><svg class="ic12" viewBox="0 0 12 12"><path d="M4 4V1.500h7V8H8" fill="none" stroke="#fff"/><path d="M4 1.500h7M1 5.500h7" stroke="#fff" stroke-width="2"/><path d="M1.500 5.500h6v5h-6z" fill="none" stroke="#fff"/></svg></button>
        <button class="closebtn" aria-label="Close window"><svg class="ic12" viewBox="0 0 12 12"><path d="M2 2l8 8M10 2l-8 8" stroke="#fff" stroke-width="2"/></svg></button>
    </div>
</header>

<nav class="menu">
    <a href="#">File</a><a href="#">Edit</a><a href="#">View</a><a href="#">Tools</a><a href="#">Help</a>
</nav>

<div class="bars">
    <div class="bar">
        <i class="grip"></i>
        <button><svg class="ic"><use href="#new"/></svg></button>
        <button><svg class="ic"><use href="#open"/></svg></button>
        <button><svg class="ic"><use href="#save"/></svg></button>
        <button><svg class="ic"><use href="#preview"/></svg></button>
        <i class="sep"></i>
        <button><svg class="ic"><use href="#newpage"/></svg></button>
        <button><svg class="ic"><use href="#newform"/></svg></button>
        <button><svg class="ic"><use href="#delpage"/></svg></button>
        <button><svg class="ic"><use href="#pagesetup"/></svg></button>
        <i class="sep"></i>
        <button><svg class="ic"><use href="#undo"/></svg></button>
        <button><svg class="ic"><use href="#redo"/></svg></button>
        <i class="sep"></i>
        <button><svg class="ic"><use href="#cut"/></svg></button>
        <button><svg class="ic"><use href="#copy"/></svg></button>
        <button><svg class="ic"><use href="#paste"/></svg></button>
        <button><svg class="ic"><use href="#delete"/></svg></button>
        <i class="sep"></i>
        <button><svg class="ic"><use href="#selectall"/></svg></button>
        <i class="sep"></i>
        <button class="on"><svg class="ic"><use href="#grid"/></svg></button>
        <button class="on"><svg class="ic"><use href="#gridsnap"/></svg></button>
        <button class="on"><svg class="ic"><use href="#headers"/></svg></button>
        <button><svg class="ic"><use href="#order"/></svg></button>
        <button><svg class="ic"><use href="#quick"/></svg></button>
        <button class="dd" aria-label="Quick options"></button>
        <button class="on"><svg class="ic"><use href="#rulers"/></svg></button>
        <i class="sep"></i>
        <span class="combo zoom"><select aria-label="Zoom"><option>100%</option></select></span>
        <button class="txt">Close</button>
        <button class="more" aria-label="More"></button>
    </div>
    <div class="bar">
        <i class="grip"></i>
        <button><svg class="ic"><use href="#ball"/></svg></button>
        <button class="on"><svg class="ic"><use href="#bnone"/></svg></button>
        <i class="sep"></i>
        <button><svg class="ic"><use href="#btop"/></svg></button>
        <button><svg class="ic"><use href="#bleft"/></svg></button>
        <button><svg class="ic"><use href="#bbottom"/></svg></button>
        <button><svg class="ic"><use href="#bright"/></svg></button>
        <i class="sep"></i>
        <button><svg class="ic"><use href="#shadow"/></svg></button>
        <i class="sep"></i>
        <button><svg class="ic"><use href="#bucket"/></svg></button>
        <button class="dd" aria-label="Fill colour"></button>
        <button><svg class="ic"><use href="#pen"/></svg></button>
        <button class="dd" aria-label="Line colour"></button>
        <button class="linestyle" aria-label="Line style"></button>
        <button class="dd" aria-label="Line styles"></button>
        <button class="more" aria-label="More"></button>
    </div>
    <div class="bar">
        <i class="grip"></i>
        <button><svg class="ic"><use href="#style"/></svg></button>
        <input class="stylebox" type="text" aria-label="Style">
        <button class="dd" aria-label="Styles"></button>
        <button class="more" aria-label="More"></button>
    </div>
</div>

<div class="bars">
    <div class="bar">
        <i class="grip"></i>
        <span class="combo font"><select aria-label="Font"><option>Arial</option></select></span>
        <span class="combo size"><select aria-label="Font size"><option>14</option></select></span>
        <i class="sep"></i>
        <button class="fmt"><b>B</b></button>
        <button class="fmt"><em>I</em></button>
        <button class="fmt"><u>U</u></button>
        <i class="sep"></i>
        <button class="on"><svg class="ic"><use href="#aleft"/></svg></button>
        <button><svg class="ic"><use href="#acenter"/></svg></button>
        <button><svg class="ic"><use href="#aright"/></svg></button>
        <button><svg class="ic"><use href="#ajust"/></svg></button>
        <i class="sep"></i>
        <button><svg class="ic"><use href="#vtop"/></svg></button>
        <button class="on"><svg class="ic"><use href="#vmid"/></svg></button>
        <button><svg class="ic"><use href="#vbot"/></svg></button>
        <i class="sep"></i>
        <button><svg class="ic"><use href="#rotate"/></svg></button>
        <button class="dd" aria-label="Angle"></button>
        <i class="sep"></i>
        <button><svg class="ic"><use href="#fontcolor"/></svg></button>
        <button class="dd" aria-label="Text colour"></button>
        <button><svg class="ic"><use href="#cond"/></svg></button>
        <button class="more" aria-label="More"></button>
    </div>
    <div class="bar">
        <i class="grip"></i>
        <button><svg class="ic"><use href="#togrid"/></svg></button>
        <i class="sep"></i>
        <button><svg class="ic"><use href="#gleft"/></svg></button>
        <button><svg class="ic"><use href="#gcenter"/></svg></button>
        <button><svg class="ic"><use href="#gright"/></svg></button>
        <i class="sep"></i>
        <button><svg class="ic"><use href="#gtop"/></svg></button>
        <button><svg class="ic"><use href="#gmid"/></svg></button>
        <button><svg class="ic"><use href="#gbot"/></svg></button>
        <i class="sep"></i>
        <button><svg class="ic"><use href="#gsize"/></svg></button>
        <button><svg class="ic"><use href="#gwidth"/></svg></button>
        <button><svg class="ic"><use href="#gheight"/></svg></button>
        <i class="sep"></i>
        <button><svg class="ic"><use href="#ghor"/></svg></button>
        <button><svg class="ic"><use href="#gver"/></svg></button>
        <i class="sep"></i>
        <button><svg class="ic"><use href="#chor"/></svg></button>
        <button><svg class="ic"><use href="#cver"/></svg></button>
        <i class="sep"></i>
        <button><svg class="ic"><use href="#front"/></svg></button>
        <button><svg class="ic"><use href="#back"/></svg></button>
        <i class="sep"></i>
        <button><svg class="ic"><use href="#fwd"/></svg></button>
        <button><svg class="ic"><use href="#bwd"/></svg></button>
        <i class="sep"></i>
        <button><svg class="ic"><use href="#lock"/></svg></button>
        <button><svg class="ic"><use href="#link"/></svg></button>
        <button class="more" aria-label="More"></button>
    </div>
</div>

<main class="main">
    <div class="toolcol">
        <div class="toolbox">
            <i class="hgrip"></i>
            <button class="on"><svg class="ic"><use href="#arrow"/></svg></button>
            <button><svg class="ic"><use href="#hand"/></svg></button>
            <button><svg class="ic"><use href="#text"/></svg></button>
            <button><svg class="ic"><use href="#brush"/></svg></button>
            <i class="hsep"></i>
            <button><svg class="ic"><use href="#bands"/></svg></button>
            <button class="sub" aria-label="Bands"></button>
            <button><svg class="ic"><use href="#cross"/></svg></button>
            <button class="sub" aria-label="Cross bands"></button>
            <button><svg class="ic"><use href="#comps"/></svg></button>
            <button class="sub" aria-label="Components"></button>
            <i class="hsep"></i>
            <button><svg class="ic"><use href="#ptop"/></svg></button>
            <button><svg class="ic"><use href="#pband"/></svg></button>
            <button><svg class="ic"><use href="#hdr"/></svg></button>
            <button><svg class="ic"><use href="#ftr"/></svg></button>
            <button><svg class="ic"><use href="#headers"/></svg></button>
            <button><svg class="ic"><use href="#ftrblue"/></svg></button>
            <button><svg class="ic"><use href="#dataBand"/></svg></button>
            <button><svg class="ic"><use href="#crosstab"/></svg></button>
            <button><svg class="ic"><use href="#textbox"/></svg></button>
            <button><svg class="ic"><use href="#image"/></svg></button>
            <button><svg class="ic"><use href="#barcode"/></svg></button>
            <button><svg class="ic"><use href="#panel"/></svg></button>
            <button><svg class="ic"><use href="#hline"/></svg></button>
            <button><svg class="ic"><use href="#vline"/></svg></button>
            <button><svg class="ic"><use href="#rect"/></svg></button>
            <button><svg class="ic"><use href="#rrect"/></svg></button>
            <button><svg class="ic"><use href="#chart"/></svg></button>
            <i class="hsep"></i>
            <button><svg class="ic"><use href="#tools"/></svg></button>
        </div>
    </div>

    <section class="client">
        <nav class="tabs">
            <a class="tab cur" href="#"><svg class="ic"><use href="#page"/></svg><span>Page1</span></a>
            <a class="tab" href="#"><svg class="ic"><use href="#code"/></svg><span>Code</span></a>
            <a class="tab" href="#"><svg class="ic"><use href="#preview"/></svg><span>Preview</span></a>
            <a class="tab" href="#"><svg class="ic"><use href="#globe"/></svg><span>HTML Preview</span></a>
        </nav>
        <div class="work">
            <div class="surface">
                <svg class="hruler" id="hruler"></svg>
                <svg class="vruler" id="vruler"></svg>
                <div class="page">
                    <div class="area">
                        <svg class="gridlines" id="gridlines"></svg>
                        <div class="band green">
                            <h2>ReportTitleBand1</h2>
                            <div class="body title">Master-Detail<br>with Columns</div>
                        </div>
                        <div class="band blue">
                            <h2>DataBand1; Источник данны»gories</h2>
                            <div class="body data1">
                                <div class="comp cat">{Categories.CategoryName}</div>
                                <div class="comp count">{Count(DataBand2)}
                                    <i class="h tl"></i><i class="h ml"></i><i class="h bl"></i><i class="h tc"></i><i class="h bc"></i>
                                </div>
                            </div>
                        </div>
                        <div class="band red">
                            <h2>ColumnHeaderBand1</h2>
                            <div class="body cols">
                                <div class="col name">Name</div><div class="gutter"></div><div class="col"></div>
                            </div>
                        </div>
                        <div class="band blue">
                            <h2>DataBand2; Источник данных: Products</h2>
                            <div class="body cols">
                                <div class="col line">{Line}.{Products.ProductName}<svg class="mark"><use href="#palette"/></svg></div><div class="gutter"></div><div class="col second"></div>
                            </div>
                        </div>
                        <div class="band red">
                            <h2>ColumnFooterBand1</h2>
                            <div class="body cols">
                                <div class="col"></div><div class="gutter"></div><div class="col"></div>
                            </div>
                        </div>
                    </div>
                </div>
            </div>
            <div class="scroll">
                <button class="sup" aria-label="Scroll up"></button>
                <div class="thumb"></div>
                <div class="space"></div>
                <button class="sdown" aria-label="Scroll down"></button>
            </div>
        </div>
    </section>

    <aside class="dict">
        <div class="dtitle"><span>Dictionary</span><button aria-label="Pin"><svg class="ic"><use href="#pin"/></svg></button><button aria-label="Close panel"><svg class="ic"><use href="#x"/></svg></button></div>
        <div class="dtools">
            <button class="txt">Actions</button><button class="dd blue" aria-label="Actions menu"></button>
            <span class="marked"><button><svg class="ic"><use href="#newds"/></svg></button><button class="dd blue" aria-label="New item menu"></button></span>
            <button><svg class="ic"><use href="#editds"/></svg></button>
            <button><svg class="ic"><use href="#delds"/></svg></button>
            <i class="sep"></i>
            <button><svg class="ic"><use href="#up"/></svg></button>
            <button><svg class="ic"><use href="#down"/></svg></button>
            <button><svg class="ic"><use href="#sort"/></svg></button>
            <button class="dd blue" aria-label="Sort menu"></button>
        </div>
        <ul class="dtree">
            <li><i class="exp plus"></i><svg class="ic"><use href="#table"/></svg><span>Data Sources</span></li>
            <li><i class="exp plus"></i><svg class="ic"><use href="#sigma"/></svg><span>System Variables</span></li>
            <li><i class="exp plus"></i><svg class="ic"><use href="#fx"/></svg><span>Functions</span></li>
        </ul>
        <div class="checks">
            <label><input type="checkbox" checked>Create Field on Double Click</label>
            <label><input type="checkbox" checked>Create Label</label>
            <label><input type="checkbox" checked>Use Aliases</label>
        </div>
        <nav class="dtabs">
            <a href="#"><svg class="ic"><use href="#props"/></svg>Properties</a>
            <a class="cur" href="#"><svg class="ic"><use href="#dict"/></svg>Dictionary</a>
            <a href="#"><svg class="ic"><use href="#tree"/></svg>Report Tree</a>
        </nav>
    </aside>
</main>

<div class="messages"><a href="#"><svg class="ic"><use href="#msg"/></svg>Messages</a></div>

<footer class="status">
    <i class="grip"></i>
    <button class="units">Centimeters</button>
    <span>Text18</span>
    <span>X:0,00&nbsp; Y:0,60&nbsp; Width:19,00&nbsp; Height:0,80</span>
</footer>

<div class="taskbar">
    <button class="start"><svg class="flag"><use href="#flag"/></svg>start</button>
    <div class="quick">
        <svg class="ic"><use href="#floppy"/></svg>
        <svg class="ic"><use href="#calc"/></svg>
        <svg class="ic"><use href="#cloud"/></svg>
        <svg class="ic"><use href="#firefox"/></svg>
        <svg class="ic"><use href="#bat"/></svg>
        <svg class="ic"><use href="#ae"/></svg>
        <svg class="ic"><use href="#claw"/></svg>
        <svg class="ic"><use href="#winamp"/></svg>
        <svg class="ic"><use href="#psd"/></svg>
        <svg class="ic"><use href="#keep"/></svg>
        <svg class="ic"><use href="#stim"/></svg>
        <svg class="ic"><use href="#stim"/></svg>
        <svg class="ic"><use href="#stim"/></svg>
        <svg class="ic"><use href="#stim"/></svg>
        <svg class="ic"><use href="#win"/></svg>
        <svg class="ic"><use href="#gears"/></svg>
        <svg class="ic"><use href="#import"/></svg>
        <svg class="ic"><use href="#fb"/></svg>
    </div>
    <div class="tasks">
        <button><svg class="ic"><use href="#firefox"/></svg>How to do ...</button>
        <button><svg class="ic"><use href="#psd"/></svg>Adobe Pho...</button>
        <button><svg class="ic"><use href="#floppy"/></svg>Total Com...</button>
        <button><svg class="ic"><use href="#winamp"/></svg>4. Bob Sinc...</button>
        <button><svg class="ic"><use href="#flower"/></svg>Andrew - 1...</button>
        <button><svg class="ic"><use href="#stim"/></svg>Stimulsoft....</button>
        <button class="active"><svg class="ic"><use href="#demo"/></svg>Demo</button>
        <button><svg class="ic"><use href="#app"/></svg>Master-De...</button>
        <button><svg class="ic"><use href="#bat"/></svg>The Bat!</button>
    </div>
    <div class="tray">
        <button class="hide" aria-label="Hide icons"><svg class="ic18" viewBox="0 0 18 18"><circle cx="9" cy="9" r="8.500" fill="url(#gTray)" stroke="#a8dcff" stroke-width=".6"/><path d="M11 5L7 9l4 4" fill="none" stroke="#fff" stroke-width="2"/></svg></button>
        <svg class="ic"><use href="#stim"/></svg>
        <svg class="ic"><use href="#gray"/></svg>
        <svg class="ic"><use href="#bat"/></svg>
        <svg class="ic"><use href="#net"/></svg>
        <svg class="ic"><use href="#kav"/></svg>
        <time>11:26</time>
    </div>
</div>

<!-- New DataSource window -->
<div class="dialog" role="dialog" aria-labelledby="dlgTitle">
    <div class="dlghead">
        <svg class="ic"><use href="#app"/></svg>
        <h2 id="dlgTitle">New DataSource</h2>
        <button aria-label="Close dialog"><svg class="ic16" viewBox="0 0 12 12"><path d="M2 2l8 8M10 2l-8 8" stroke="#fff" stroke-width="1.600"/></svg></button>
    </div>
    <div class="dlgbody">
        <div class="dlgtools">
            <i class="grip"></i>
            <button><svg class="ic"><use href="#newdb"/></svg>New Connection...</button>
            <button disabled><svg class="ic"><use href="#propsoff"/></svg>Edit</button>
        </div>
        <ul class="tree">
            <li><i class="exp none"></i><svg class="ic"><use href="#folder"/></svg><span>Connections</span></li>
            <li><i class="exp minus"></i><svg class="ic"><use href="#folder"/></svg><span>Data Adapters</span></li>
            <li class="kid"><svg class="ic"><use href="#db"/></svg><span>Data from Sql Connection</span></li>
            <li class="kid"><svg class="ic"><use href="#db"/></svg><span>Data from OleDb Connection</span></li>
            <li class="kid"><svg class="ic"><use href="#db"/></svg><span>Data from User Sources</span></li>
            <li class="kid"><svg class="ic"><use href="#db"/></svg><span>Data from Business Objects</span></li>
            <li class="kid"><svg class="ic"><use href="#db"/></svg><span>Data from DataSet, DataTables</span></li>
            <li class="kid"><svg class="ic"><use href="#db"/></svg><span>Data from DataViews</span></li>
            <li class="kid picked"><svg class="ic"><use href="#db"/></svg><span>Data from other Data Source</span></li>
            <li class="kid"><svg class="ic"><use href="#db"/></svg><span>Data from CrossTab</span></li>
            <li class="kid"><svg class="ic"><use href="#db"/></svg><span>Data from dBase Files</span></li>
            <li class="kid"><svg class="ic"><use href="#db"/></svg><span>Data from Csv Files</span></li>
            <li class="kid last"><svg class="ic"><use href="#db"/></svg><span>Data from Odbc Connection</span></li>
        </ul>
        <div class="dlgfoot">
            <button class="default">OK</button>
            <button>Cancel</button>
        </div>
        <svg class="sizer" viewBox="0 0 12 12"><path d="M9 1h2v2H9zM5 5h2v2H5zM9 5h2v2H9zM1 9h2v2H1zM5 9h2v2H5zM9 9h2v2H9z" fill="#b8b4a0"/></svg>
    </div>
</div>
<script src="script.js"></script>
</body>
</html>
```
FILE: styles.css
```css
*,*::before,*::after{
    box-sizing: border-box;
}
body{
    margin: 0;
    height: 100vh;
    display: flex;
    flex-direction: column;
    overflow: hidden;
    background: #bfdbff;
    font: 11px/16px "DejaVu Sans Condensed", "Liberation Sans", sans-serif;
    color: #000;
}
h1,h2,ul{
    margin: 0;
    padding: 0;
    list-style: none;
}
a{
    color: inherit;
    text-decoration: none;
}
button{
    display: flex;
    align-items: center;
    justify-content: center;
    padding: 0;
    border: 0;
    background: none;
    font: inherit;
    color: inherit;
    flex: none;
    white-space: nowrap;
}
svg{
    flex: none;
}
.sprite{
    position: absolute;
    width: 0;
    height: 0;
}
.ic,.ic16{
    width: 16px;
    height: 16px;
}
.ic12{
    width: 12px;
    height: 12px;
}
.ic18{
    width: 20px;
    height: 20px;
}

/* title bar and menu */
.titlebar{
    flex: none;
    height: 26px;
    display: flex;
    align-items: center;
    gap: 4px;
    padding: 0 2px;
    background: linear-gradient(#98b4ee,#7a96df 20%,#7b98e0 50%,#86a8ec 85%,#7894dc);
}
.titlebar h1{
    flex: 1;
    font-size: 12px;
    color: #d8e4f8;
}
.winbtns{
    display: flex;
    gap: 3px;
}
.winbtns button{
    width: 20px;
    height: 20px;
    border: 1px solid #c8d6f4;
    border-radius: 3px;
    background: linear-gradient(135deg,#7d9ef0,#3f66d4);
}
.winbtns .closebtn{
    background: linear-gradient(135deg,#d09098,#b65566);
}
.min{
    width: 8px;
    height: 3px;
    margin: 9px 4px 0 0;
    background: #fff;
}
.menu{
    flex: none;
    height: 25px;
    display: flex;
    align-items: center;
    gap: 18px;
    padding-left: 12px;
    color: #15428b;
}

/* toolbars */
.bars{
    flex: none;
    height: 27px;
    display: flex;
    gap: 4px;
}
.bars + .bars{
    margin-top: 1px;
}
.bar{
    height: 27px;
    display: flex;
    align-items: center;
    gap: 1px;
    padding-left: 3px;
    border-radius: 3px;
    border-bottom: 1px solid #6f9dd9;
    background: linear-gradient(#dfecfd,#d3e4fc 45%,#bdd8fd 60%,#c3dcff);
}
.bar > button{
    width: 24px;
    height: 22px;
}
button.on{
    border: 1px solid #c2621a;
    background: linear-gradient(#fdd08c,#ffc55c);
}
.grip{
    flex: none;
    width: 3px;
    height: 18px;
    margin-right: 1px;
    background: repeating-linear-gradient(#6f9dd9 0 2px,transparent 2px 5px);
}
.sep{
    flex: none;
    width: 2px;
    height: 20px;
    background: #f4f9ff;
    border-left: 1px solid #c4d8f4;
}
.bar > .dd,.dd{
    width: 13px;
    height: 22px;
}
.dd::after{
    content: "";
    border: 3px solid transparent;
    border-top-color: #000;
    border-bottom: 0;
}
.dd.blue::after{
    border-top-color: #15428b;
}
.bar > .txt{
    width: auto;
    padding: 0 20px;
}
.bar > .more{
    width: 12px;
    height: 26px;
    flex-direction: column;
    justify-content: flex-end;
    gap: 2px;
    padding-bottom: 5px;
    border-radius: 0 3px 3px 0;
    background: linear-gradient(#c4dafa,#6f9ddc);
}
.more::before{
    content: "";
    width: 6px;
    height: 1px;
    background: #000;
}
.more::after{
    content: "";
    border: 3px solid transparent;
    border-top-color: #000;
    border-bottom: 0;
}
.combo{
    position: relative;
    flex: none;
    height: 21px;
}
.combo::after{
    content: "";
    position: absolute;
    right: 5px;
    top: 9px;
    border: 3px solid transparent;
    border-top-color: #15428b;
    border-bottom: 0;
}
.combo select{
    appearance: none;
    width: 100%;
    height: 21px;
    padding: 0 4px;
    border: 1px solid #abc1de;
    background: #eaf2fb;
    font: inherit;
    color: #000;
}
.zoom{
    width: 70px;
}
.font{
    width: 130px;
    margin: 0 4px 0 2px;
}
.size{
    width: 50px;
    margin-right: 2px;
}
.bar > .fmt{
    font: 15px "Liberation Serif", serif;
}
.fmt b,.fmt em,.fmt u{
    font-weight: bold;
}
.bar > .linestyle{
    width: 62px;
    height: 13px;
    margin: 0 1px 0 2px;
    border: 1px solid #000;
    background: linear-gradient(#fff 4px,#000 4px 6px,#fff 6px);
}
.stylebox{
    width: 69px;
    height: 20px;
    border: 1px solid #abc1de;
    background: #fff;
    font: inherit;
}

/* main area */
.main{
    flex: 1;
    min-height: 0;
    display: flex;
}
.toolcol{
    flex: none;
    width: 29px;
}
.toolbox{
    display: flex;
    flex-direction: column;
    gap: 1px;
    padding: 4px 1px 2px;
    border-bottom: 1px solid #6f9dd9;
    border-radius: 3px;
    background: linear-gradient(90deg,#dfecfd,#c0dafd);
}
.toolbox button{
    width: 26px;
    height: 22px;
}
.toolbox .sub{
    height: 9px;
    align-items: flex-start;
}
.sub::after{
    content: "";
    border: 3px solid transparent;
    border-left-color: #000;
    border-right: 0;
}
.hgrip{
    height: 2px;
    margin: 0 2px 2px;
    background: repeating-linear-gradient(90deg,#6f9dd9 0 2px,transparent 2px 5px);
}
.hsep{
    height: 1px;
    margin: 0 1px 1px;
    background: #fff;
}
.client{
    flex: 1;
    min-width: 0;
    display: flex;
    flex-direction: column;
    border-left: 1px solid #6f9dd9;
}
.tabs{
    flex: none;
    height: 26px;
    display: flex;
    align-items: flex-end;
    background: linear-gradient(#d5e6fd,#e3effe 40%,#b4d2fb);
    border-bottom: 1px solid #8eaedb;
}
.tab{
    position: relative;
    height: 24px;
    display: flex;
    align-items: center;
    gap: 4px;
    padding: 0 19px 2px 4px;
    margin-right: -10px;
    color: #15428b;
    z-index: 1;
}
.tab::before,.tab::after{
    content: "";
    position: absolute;
    top: 0;
    bottom: 0;
    border-top: 1px solid #8eaedb;
    background: linear-gradient(#e6f0fe,#c4dbfa);
    z-index: -1;
}
.tab::before{
    left: 0;
    right: 24px;
    border-left: 1px solid #8eaedb;
    border-radius: 5px 0 0 0;
}
.tab::after{
    right: 0;
    width: 25px;
    border-right: 1px solid #8eaedb;
    border-radius: 0 6px 0 0;
    transform: skewX(32deg);
    transform-origin: right bottom;
}
.tab.cur{
    z-index: 2;
    gap: 5px;
    padding-left: 3px;
    font-weight: bold;
}
.tab.cur::before,.tab.cur::after{
    background: #fff;
}
.work{
    flex: 1;
    min-height: 0;
    display: flex;
    background: #97b5e0;
}
.surface{
    flex: 1;
    min-width: 0;
    overflow: hidden;
    display: grid;
    grid-template-columns: 15px 830px;
    grid-template-rows: 15px 1fr;
    gap: 12px;
    padding: 3px 0 0 3px;
    background: linear-gradient(#9bbae3,#96b4df);
}
.hruler{
    grid-column: 2;
    width: 100%;
    height: 15px;
}
.vruler{
    width: 15px;
    height: 100%;
}
.hruler text,.vruler text{
    font: 9px "Liberation Sans", sans-serif;
    fill: #555;
    text-anchor: middle;
}
.page{
    min-height: 0;
    height: 1180px;
    padding: 38px;
    border: 1px solid #000;
    background: #fff;
    box-shadow: 2px 2px 2px #5f7ba8;
}
.area{
    position: relative;
    height: 100%;
    display: flex;
    flex-direction: column;
    gap: 15px;
    border-right: 1px solid #808080;
    font: 13px/16px "Liberation Sans", sans-serif;
}
.gridlines{
    position: absolute;
    left: 0;
    top: 0;
    width: 100%;
    height: 100%;
}
.band{
    position: relative;
    border-left: 1px solid #696969;
}
.band h2{
    height: 16px;
    padding-left: 1px;
    border-top: 1px solid #696969;
    font-size: 13px;
    font-weight: normal;
    line-height: 15px;
}
.green h2{
    background: linear-gradient(#90ee90,#3cb371);
}
.blue h2{
    background: linear-gradient(#add8e6,#6495ed);
}
.red h2{
    background: linear-gradient(#ffa07a,#ff4500);
}
.body{
    border-bottom: 1px dashed #808080;
}
.green .body{
    height: 119px;
    background: rgba(232,244,238,.66);
    border-color: #b0bab4;
}
.blue .body{
    background: rgba(100,149,237,.16);
}
.red .body{
    background: rgba(255,69,0,.16);
}
.title{
    font-size: 48px;
    line-height: 56px;
    font-weight: bold;
    text-align: center;
    color: #8b4513;
}
.data1{
    height: 64px;
}
.comp{
    padding-left: 4px;
    background: #f5deb3;
    color: #8b4513;
    font-size: 19px;
}
.cat{
    height: 24px;
    line-height: 22px;
    font-weight: bold;
}
.count{
    position: relative;
    height: 32px;
    padding-left: 3px;
    line-height: 32px;
    color: #a0522d;
}
.h{
    position: absolute;
    width: 5px;
    height: 5px;
    background: #696969;
}
.tl,.ml,.bl{
    left: -3px;
}
.tc,.bc{
    left: 50%;
    margin-left: -2px;
}
.tl,.tc{
    top: -2px;
}
.ml{
    top: 14px;
}
.bl,.bc{
    bottom: -2px;
}
.cols{
    display: flex;
    height: 24px;
}
.col{
    flex: 1;
}
.gutter{
    width: 24px;
    border: 1px dashed #f00;
    border-width: 0 1px;
}
.name{
    text-indent: 3px;
    background: #cd853f;
    color: #fff;
    font-size: 19px;
    line-height: 22px;
    font-weight: bold;
}
.line{
    position: relative;
    text-indent: 2px;
    background: rgba(248,250,255,.75);
    line-height: 24px;
}
.mark{
    position: absolute;
    left: 1px;
    bottom: 2px;
    width: 8px;
    height: 8px;
}
.second{
    border: 1px dashed #00f;
    border-width: 1px 0;
    background: rgba(0,0,255,.2);
}

/* scroll bar of the designer */
.scroll{
    flex: none;
    width: 15px;
    display: flex;
    flex-direction: column;
    margin-top: 20px;
    background: #f3f6fb;
}
.scroll button{
    height: 18px;
}
.sup::after,.sdown::after{
    content: "";
    border: 4px solid transparent;
}
.sup::after{
    border-bottom: 5px solid #4a6a9c;
    border-top: 0;
}
.sdown::after{
    border-top: 5px solid #4a6a9c;
    border-bottom: 0;
}
.thumb{
    flex: 534;
    margin: 0 1px;
    border: 1px solid #6f8fc4;
    border-radius: 2px;
    background: repeating-linear-gradient(#6f8fc4 0 1px,transparent 1px 2px) center/7px 8px no-repeat, linear-gradient(90deg,#dbe8fb,#b8d0f2);
}
.space{
    flex: 249;
}

/* dictionary panel */
.dict{
    flex: none;
    width: 305px;
    padding: 0 1px 0 6px;
    display: flex;
    flex-direction: column;
    color: #15428b;
}
.dtitle{
    height: 21px;
    display: flex;
    align-items: center;
    gap: 2px;
    padding-left: 4px;
    border: 1px solid #6f9dd9;
    background: linear-gradient(#e3efff,#afd2ff);
}
.dtitle span{
    flex: 1;
}
.dtools{
    height: 28px;
    display: flex;
    align-items: center;
    gap: 1px;
    padding-left: 9px;
    border-bottom: 1px solid #6f9dd9;
    background: linear-gradient(#dfecfd,#c3dcfd);
}
.dtools button{
    width: 23px;
}
.dtools .dd{
    width: 12px;
}
.dtools .txt{
    width: 38px;
}
.marked{
    position: relative;
    display: flex;
    align-items: center;
    gap: 2px;
    padding: 0 6px 0 2px;
}
.marked::after{
    content: "";
    position: absolute;
    left: -1px;
    right: 0;
    top: -6px;
    bottom: -7px;
    border: 3px solid #f00;
    z-index: 3;
}
.marked + button{
    margin-left: -6px;
}
.dtree{
    flex: 1;
    padding: 2px 8px;
    border: 1px solid #8eaedb;
    border-top: 0;
    margin: 0 2px 0 1px;
    background: #fff;
    color: #000;
}
.dtree li,.tree li{
    height: 16px;
    display: flex;
    align-items: center;
}
.dtree span{
    padding-left: 4px;
}
.exp{
    position: relative;
    flex: none;
    width: 9px;
    height: 9px;
    margin-right: 7px;
    border: 1px solid #7b9ebd;
    border-radius: 1px;
    background: linear-gradient(#000,#000) center/5px 1px no-repeat, linear-gradient(#fff,#d8d2c4);
}
.exp.plus{
    background: linear-gradient(#000,#000) center/5px 1px no-repeat, linear-gradient(#000,#000) center/1px 5px no-repeat, linear-gradient(#fff,#d8d2c4);
}
.exp::after{
    content: "";
    position: absolute;
    left: 8px;
    top: 3px;
    width: 6px;
    border-top: 1px dotted #a0a090;
}
.dtree li + li .exp::before{
    content: "";
    position: absolute;
    left: 3px;
    top: -8px;
    height: 7px;
    border-left: 1px dotted #a0a090;
}
.exp.none{
    border-color: transparent;
    background: none;
}
.exp.none::after{
    left: 3px;
    width: 11px;
    height: 10px;
    border-left: 1px dotted #a0a090;
}
.checks{
    height: 52px;
    padding: 2px 5px;
}
.checks label{
    height: 16px;
    display: flex;
    align-items: center;
    gap: 7px;
}
.checks input{
    appearance: none;
    width: 12px;
    height: 12px;
    margin: 0;
    border: 1px solid #9db3d0;
    background: #f0f4fa;
}
.checks input:checked::before{
    content: "";
    display: block;
    width: 5px;
    height: 8px;
    margin: 0 3px;
    border: solid #4a607c;
    border-width: 0 2px 2px 0;
    transform: rotate(40deg);
}
.dtabs{
    height: 24px;
    display: flex;
    gap: 2px;
    padding: 0 6px;
    border-top: 1px solid #8eaedb;
    background: linear-gradient(#d4e5fd,#b4d2fb);
}
.dtabs a{
    height: 21px;
    display: flex;
    align-items: center;
    gap: 3px;
    padding: 0 4px 0 2px;
    border: 1px solid #8eaedb;
    border-top: 0;
    border-radius: 0 0 4px 4px;
}
.dtabs .cur{
    background: #fff;
}

/* bottom bars */
.messages{
    flex: none;
    height: 24px;
    padding: 2px 0 0 31px;
    display: flex;
    border-bottom: 1px solid #5a8ac8;
    background: linear-gradient(#e3effe,#b4d2fb);
}
.messages a{
    display: flex;
    align-items: center;
    gap: 2px;
    padding: 0 4px 0 2px;
    border: 1px solid #8eaedb;
    border-bottom: 0;
    border-radius: 3px 3px 0 0;
    background: linear-gradient(#e9f2fe,#bcd7fc);
}
.status{
    flex: none;
    height: 27px;
    display: flex;
    align-items: center;
    padding: 0 0 2px 3px;
    background: linear-gradient(#d7e6f9,#c6dcf8 35%,#b5d0f5 36%,#d7e5f7);
    color: #15428b;
}
.status .units{
    gap: 10px;
    padding: 0 4px 0 8px;
    color: #000;
}
.units::after{
    content: "";
    border: 3px solid transparent;
    border-bottom-color: #000;
    border-top: 0;
}
.status span{
    padding: 0 9px 0 4px;
    border-left: 1px solid #f4f9ff;
}
.taskbar{
    flex: none;
    height: 30px;
    display: flex;
    background: linear-gradient(#3b80ee,#2459d6 12%,#2560e0 80%,#1941a5);
    color: #fff;
}
.start{
    width: 97px;
    gap: 4px;
    padding-right: 14px;
    border-radius: 0 8px 8px 0;
    background: linear-gradient(#5eac5e,#3a9a3c 15%,#318c33 80%,#1f6c22);
    box-shadow: inset -3px 0 4px #1f6c22;
    font: italic bold 17px "Open Sans", "Liberation Sans", sans-serif;
    text-shadow: 1px 1px 1px #1c4a1c;
}
.flag{
    width: 20px;
    height: 18px;
}
.quick{
    display: flex;
    align-items: center;
    gap: 7px;
    padding: 0 25px 0 12px;
}
.tasks{
    flex: 1;
    min-width: 0;
    display: flex;
    align-items: center;
    gap: 3px;
}
.tasks button{
    flex: 0 1 106px;
    height: 24px;
    justify-content: flex-start;
    gap: 3px;
    padding-left: 7px;
    border-radius: 3px;
    background: linear-gradient(#5c9cf8,#3c80f2 20%,#3a7cf0);
    box-shadow: inset -1px -1px 1px #2358c4;
}
.tasks .active{
    background: #1b4cae;
    box-shadow: inset 1px 1px 2px #123580;
}
.tray{
    display: flex;
    align-items: center;
    gap: 2px;
    padding: 0 14px 0 0;
    background: linear-gradient(#3cb8f4,#0f8ce8 15%,#128fea 80%,#0b6cc0);
}
.tray .hide{
    margin-left: -10px;
}
.tray time{
    padding-left: 6px;
}

/* dialog window */
.dialog{
    position: absolute;
    left: 593px;
    top: 245px;
    width: 494px;
    height: 529px;
    display: flex;
    flex-direction: column;
    border-radius: 7px 7px 0 0;
    padding: 0 4px 4px;
    background: #0a3fe0;
    box-shadow: inset -1px -1px 0 #001ea0, inset 1px 0 0 #0028b8;
    z-index: 5;
}
.dlghead{
    flex: none;
    height: 30px;
    display: flex;
    align-items: center;
    gap: 4px;
    margin: 0 -4px;
    padding: 3px 6px 0 6px;
    border-radius: 7px 7px 0 0;
    background: linear-gradient(#0a50dc,#2a80fa 8%,#0458e4 20%,#0054e3 50%,#0468fc 85%,#0344c8);
}
.dlghead h2{
    flex: 1;
    font-size: 12px;
    color: #fff;
    text-shadow: 1px 1px 0 #0a2880;
}
.dlghead button{
    width: 21px;
    height: 21px;
    border: 1px solid #fff;
    border-radius: 3px;
    background: linear-gradient(135deg,#f0987c,#d8431c 50%,#b83410);
}
.dlgbody{
    position: relative;
    flex: 1;
    display: flex;
    flex-direction: column;
    background: #ece9d8;
}
.dlgtools{
    height: 25px;
    display: flex;
    align-items: center;
    padding-left: 3px;
    border-bottom: 1px solid #6f9dd9;
    background: linear-gradient(#dfecfd,#d3e4fc 45%,#b9d5fd);
    color: #15428b;
}
.dlgtools button{
    gap: 4px;
    padding: 0 6px 0 4px;
}
.dlgtools button:disabled{
    color: #8d8d8d;
}
.tree{
    flex: 1;
    margin: 2px 2px 0;
    padding: 1px 8px;
    border: 1px solid #7f9db9;
    background: #fff;
}
.tree .exp{
    margin-right: 6px;
}
.tree span{
    padding: 0 4px 0 3px;
    margin-left: 2px;
}
.tree .kid{
    position: relative;
    padding-left: 34px;
}
.kid::before{
    content: "";
    position: absolute;
    left: 23px;
    top: 0;
    bottom: 0;
    border-left: 1px dotted #a0a090;
}
.kid.last::before{
    bottom: 8px;
}
.kid::after{
    content: "";
    position: absolute;
    left: 24px;
    top: 8px;
    width: 10px;
    border-top: 1px dotted #a0a090;
}
.picked span{
    background: #316ac5;
    color: #fff;
}
/* red frame round the chosen adapter */
.tree .picked::before{
    left: 19px;
    top: -4px;
    width: 200px;
    height: 23px;
    border: 3px solid #f00;
    z-index: 2;
}
.dlgfoot{
    display: flex;
    justify-content: flex-end;
    gap: 8px;
    padding: 9px 13px;
}
.dlgfoot button{
    width: 103px;
    height: 21px;
    border: 1px solid #003c74;
    border-radius: 3px;
    background: linear-gradient(#fff,#f4f3ee 60%,#dcd8cc);
}
.dlgfoot .default{
    box-shadow: inset 0 0 0 2px #a4c2f4;
}
.sizer{
    position: absolute;
    right: 0;
    bottom: 0;
    width: 12px;
    height: 12px;
}
```
FILE: script.js
```js
// pixels in one centimeter of the report page
const CM = 39.6;
const NS = "http://www.w3.org/2000/svg";

function add(parent, name, attrs, text) {
    const el = document.createElementNS(NS, name);
    for (let key in attrs) {
        el.setAttribute(key, attrs[key]);
    }
    if (text !== undefined) {
        el.textContent = text;
    }
    parent.appendChild(el);
}

// horizontal ruler: 1 cm margin, 19 cm of page, 1 cm margin
const hruler = document.getElementById("hruler");
const start = 39;
add(hruler, "rect", {x: 0, y: 0, width: 830, height: 15, fill: "#dbe6f8"});
add(hruler, "rect", {x: 1, y: 1, width: 828, height: 13, fill: "#b0c8ec"});
add(hruler, "rect", {x: start, y: 1, width: 752, height: 13, fill: "#ffd38c"});
for (let i = 0; i <= 19; i++) {
    const x = Math.round(start + i * CM);
    add(hruler, "text", {x: x, y: 10}, i);
    if (i < 19) {
        add(hruler, "rect", {x: Math.round(x + CM / 2), y: 3, width: 1, height: 9, fill: "#666"});
    }
}

// vertical ruler, the selected component is marked from 190 to 221
const vruler = document.getElementById("vruler");
const visible = window.innerHeight - 81 - vruler.getBoundingClientRect().top;
add(vruler, "rect", {x: 0, y: 0, width: 15, height: "100%", fill: "#dbe6f8"});
add(vruler, "rect", {x: 1, y: 1, width: 13, height: 38, fill: "#b0c8ec"});
add(vruler, "rect", {x: 1, y: start, width: 13, height: "100%", fill: "#fff"});
add(vruler, "rect", {x: 1, y: start + 190, width: 13, height: 31, fill: "#ffd38c"});
for (let i = 0; start + i * CM + 6 < visible; i++) {
    const y = Math.round(start + i * CM);
    add(vruler, "text", {x: 7, y: y + 3}, i);
    add(vruler, "rect", {x: 3, y: Math.round(y + CM / 2) - 1, width: 9, height: 1, fill: "#666"});
}

// grid of 0.2 cm, every second line is darker
const grid = document.getElementById("gridlines");
const step = CM / 5;
for (let pass = 1; pass >= 0; pass--) {
    const fill = pass ? "#dadada" : "#b8b8b8";
    for (let i = pass; i * step < 752; i += 2) {
        add(grid, "rect", {x: Math.round(i * step), y: 0, width: 1, height: "100%", fill: fill});
    }
    for (let i = pass; i < 140; i += 2) {
        add(grid, "rect", {x: 0, y: Math.round(i * step), width: "100%", height: 1, fill: fill});
    }
}
```
